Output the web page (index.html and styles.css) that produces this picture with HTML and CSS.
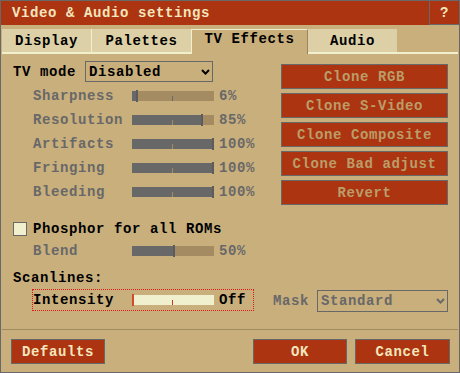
FILE: index.html
```html
<!DOCTYPE html>
<html>
<head>
<meta charset="utf-8">
<link rel="stylesheet" href="styles.css">
</head>
<body>
<div class="window">
  <div class="titlebar">
    <span class="title">Video &amp; Audio settings</span>
    <span class="help">?</span>
  </div>
  <div class="tabs">
    <div class="tab t-display">Display</div>
    <div class="tab t-palettes">Palettes</div>
    <div class="tab active t-tv">TV Effects</div>
    <div class="tab t-audio">Audio</div>
    <div class="tab-rest"></div>
  </div>
  <div class="top">
    <div class="left">
      <div class="mode-row">
        <span class="mode-label">TV mode</span>
        <div class="select">
          <span>Disabled</span>
          <svg class="chev" width="9" height="6" viewBox="0 0 9 6"><polyline points="1,1 4.5,4.6 8,1" fill="none" stroke="#000" stroke-width="2"/></svg>
        </div>
      </div>
      <div class="srow dis">
        <span class="slabel">Sharpness</span>
        <div class="track"><div class="fill" style="width:4px"></div><div class="tick"></div><div class="handle" style="left:4px"></div></div>
        <span class="val">6%</span>
      </div>
      <div class="srow dis">
        <span class="slabel">Resolution</span>
        <div class="track"><div class="fill" style="width:69px"></div><div class="tick on"></div><div class="handle" style="left:69px"></div></div>
        <span class="val">85%</span>
      </div>
      <div class="srow dis">
        <span class="slabel">Artifacts</span>
        <div class="track"><div class="fill" style="width:80px"></div><div class="tick on"></div><div class="handle" style="left:80px"></div></div>
        <span class="val">100%</span>
      </div>
      <div class="srow dis">
        <span class="slabel">Fringing</span>
        <div class="track"><div class="fill" style="width:80px"></div><div class="tick on"></div><div class="handle" style="left:80px"></div></div>
        <span class="val">100%</span>
      </div>
      <div class="srow dis">
        <span class="slabel">Bleeding</span>
        <div class="track"><div class="fill" style="width:80px"></div><div class="tick on"></div><div class="handle" style="left:80px"></div></div>
        <span class="val">100%</span>
      </div>
    </div>
    <div class="right">
      <div class="btn dbtn">Clone RGB</div>
      <div class="btn dbtn">Clone S-Video</div>
      <div class="btn dbtn">Clone Composite</div>
      <div class="btn dbtn">Clone Bad adjust</div>
      <div class="btn dbtn">Revert</div>
    </div>
  </div>
  <div class="bottom">
    <div class="check-row"><span class="box"></span><span>Phosphor for all ROMs</span></div>
    <div class="srow dis">
      <span class="slabel">Blend</span>
      <div class="track"><div class="fill" style="width:41px"></div><div class="tick"></div><div class="handle" style="left:41px"></div></div>
      <span class="val">50%</span>
    </div>
    <div class="scan-row">Scanlines:</div>
    <div class="int-row">
      <div class="focus">
        <span class="slabel">Intensity</span>
        <div class="track light"><div class="tick red"></div><div class="handle red" style="left:0px"></div></div>
        <span class="val">Off</span>
      </div>
      <span class="mask-label">Mask</span>
      <div class="select mask-select">
        <span>Standard</span>
        <svg class="chev" width="9" height="6" viewBox="0 0 9 6"><polyline points="1,1 4.5,4.6 8,1" fill="none" stroke="#686868" stroke-width="2"/></svg>
      </div>
    </div>
  </div>
  <div class="footer">
    <div class="sep"></div>
    <div class="foot-btns">
      <div class="btn fbtn w94">Defaults</div>
      <div class="spacer"></div>
      <div class="btn fbtn w94">OK</div>
      <div class="btn fbtn w95 cancel">Cancel</div>
    </div>
  </div>
</div>
</body>
</html>
```
FILE: styles.css
```css
* { box-sizing: border-box; }
html, body { margin: 0; padding: 0; }
body {
  width: 460px;
  height: 373px;
  overflow: hidden;
  background: #c9af7c;
  font-family: "Liberation Mono", "DejaVu Sans Mono", monospace;
  font-weight: bold;
  font-size: 14px;
  letter-spacing: 0.6px;
  color: #000;
}
.window {
  width: 460px;
  height: 373px;
  border: 1px solid #686868;
  background: #c9af7c;
  display: flex;
  flex-direction: column;
}
.titlebar {
  height: 24px;
  flex: none;
  background: #ac3410;
  display: flex;
  align-items: center;
  justify-content: space-between;
}
.title {
  padding-left: 11px;
  padding-bottom: 1px;
  color: #f3e6bd;
}
.help {
  width: 30px;
  height: 24px;
  border-left: 1px solid #686868;
  border-bottom: 1px solid #686868;
  color: #f3e6bd;
  display: flex;
  align-items: center;
  justify-content: center;
}
.tabs {
  display: flex;
  flex: none;
  margin-top: 4px;
  padding: 0 1px;
  height: 25px;
}
.tab {
  height: 25px;
  background: #ddd0a6;
  border-bottom: 2px solid #f0f0cf;
  display: flex;
  justify-content: center;
  padding-top: 4px;
  line-height: 16px;
}
.t-display { width: 89px; }
.t-palettes { width: 100px; border-left: 1px solid #f0f0cf; }
.t-audio { width: 89px; }
.tab.active {
  width: 117px;
  background: #c9af7c;
  border-bottom: none;
  border-top: 1px solid #f0f0cf;
  border-left: 1px solid #f0f0cf;
  border-right: 1px solid #9c845e;
  padding-top: 1px;
}
.tab-rest {
  flex: 1;
  border-bottom: 2px solid #f0f0cf;
}
.top {
  display: flex;
  padding: 7px 0 0 12px;
}
.left {
  width: 268px;
  display: flex;
  flex-direction: column;
}
.mode-row {
  height: 21px;
  margin-bottom: 2px;
  display: flex;
  align-items: center;
}
.mode-label { width: 72px; }
.select {
  width: 128px;
  height: 21px;
  border: 1px solid #686868;
  display: flex;
  align-items: center;
  justify-content: space-between;
  padding: 0 2px 0 3px;
}
.chev { display: block; }
.srow {
  height: 24px;
  display: flex;
  align-items: center;
  padding-left: 20px;
}
.dis { color: #686868; }
.slabel { width: 99px; flex: none; }
.track {
  width: 82px;
  height: 10px;
  flex: none;
  position: relative;
  background: #a48b62;
  display: flex;
}
.track.light { background: #f0f0cf; }
.fill { height: 10px; background: #686868; }
.tick {
  position: absolute;
  left: 40px;
  top: 5px;
  width: 1px;
  height: 5px;
  background: #686868;
}
.tick.on { background: #a48b62; }
.tick.red { background: #c8361a; }
.handle {
  position: absolute;
  top: -1px;
  width: 2px;
  height: 12px;
  background: #5c5c5c;
}
.handle.red { background: #d04a2c; }
.val { margin-left: 5px; }
.right {
  width: 167px;
  margin-top: 3px;
  display: flex;
  flex-direction: column;
  gap: 4px;
}
.btn {
  height: 25px;
  border: 1px solid #686868;
  background: #ac3410;
  display: flex;
  align-items: center;
  justify-content: center;
}
.dbtn { color: #bb9d68; }
.fbtn { color: #f3e6bd; }
.bottom {
  padding-left: 12px;
  display: flex;
  flex-direction: column;
}
.check-row {
  margin-top: 14px;
  height: 20px;
  display: flex;
  align-items: center;
}
.box {
  width: 14px;
  height: 14px;
  border: 1px solid #686868;
  background: #f0f0cf;
  margin-right: 6px;
}
.scan-row {
  margin-top: 5px;
  height: 20px;
  display: flex;
  align-items: center;
}
.int-row {
  margin-top: 1px;
  display: flex;
  align-items: flex-start;
}
.focus {
  margin-left: 19px;
  width: 222px;
  height: 22px;
  border: 1px dotted #e01818;
  display: flex;
  align-items: center;
}
.mask-label {
  margin-left: 19px;
  width: 44px;
  height: 24px;
  display: flex;
  align-items: center;
  color: #686868;
}
.mask-select {
  width: 131px;
  height: 22px;
  margin-top: 1px;
  color: #686868;
}
.footer {
  margin-top: auto;
}
.sep {
  height: 1px;
  margin: 0 1px;
  background: #a08a60;
}
.foot-btns {
  display: flex;
  padding: 9px 9px 8px 10px;
}
.spacer { flex: 1; }
.w94 { width: 94px; }
.w95 { width: 95px; }
.cancel { margin-left: 8px; }
```
